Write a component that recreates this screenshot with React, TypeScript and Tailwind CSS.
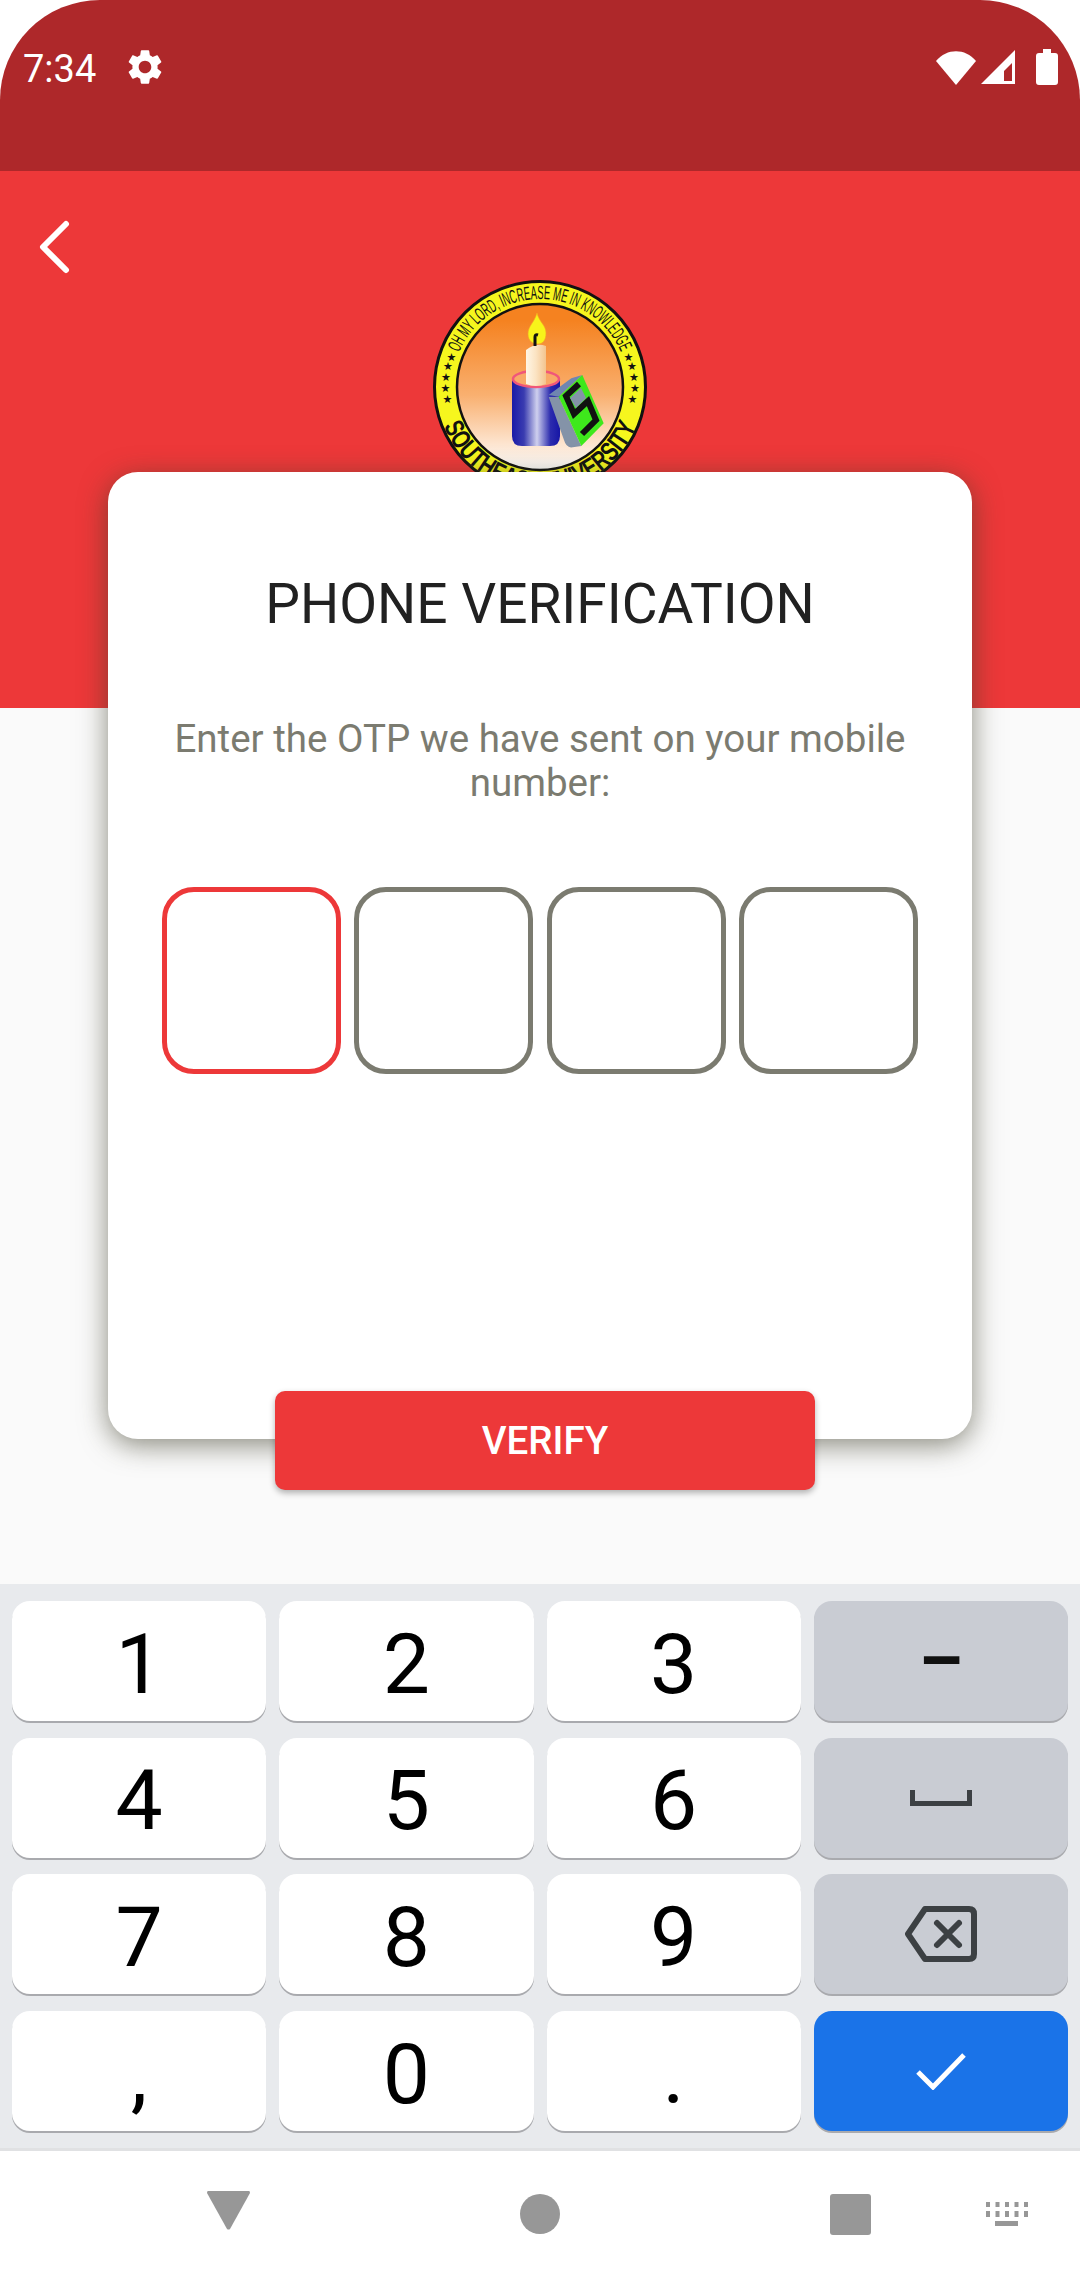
const Logo = () => (
  <svg width="214" height="214" viewBox="0 0 214 214" className="block">
    <defs>
      <linearGradient id="sky" x1="0" y1="0" x2="0" y2="1">
        <stop offset="0.1" stopColor="#f58220" />
        <stop offset="0.55" stopColor="#f9b070" />
        <stop offset="0.85" stopColor="#fde6d2" />
        <stop offset="1" stopColor="#ffffff" />
      </linearGradient>
      <linearGradient id="can" x1="0" y1="0" x2="1" y2="0">
        <stop offset="0" stopColor="#1a1aa8" />
        <stop offset="0.25" stopColor="#3a3cb0" />
        <stop offset="0.52" stopColor="#cfd0ee" />
        <stop offset="0.8" stopColor="#2c2cae" />
        <stop offset="1" stopColor="#1616a6" />
      </linearGradient>
      <linearGradient id="wax" x1="0" y1="0" x2="1" y2="0">
        <stop offset="0" stopColor="#fff6e6" />
        <stop offset="0.5" stopColor="#fbe3c2" />
        <stop offset="1" stopColor="#f3c48e" />
      </linearGradient>
      <path id="topArc" d="M 26 72.600 A 88 88 0 0 1 188 72.600" fill="none" />
      <path id="botArc" d="M 10.600 146 A 104 104 0 0 0 203.400 146" fill="none" />
    </defs>
    <circle cx="107" cy="107" r="105.500" fill="#f6f61e" stroke="#111111" strokeWidth="3" />
    <circle cx="107" cy="107" r="83" fill="url(#sky)" stroke="#111111" strokeWidth="2.500" />
    <text fill="#111111" fontFamily="'Liberation Sans', sans-serif" fontSize="19">
      <textPath href="#topArc" textLength="205" lengthAdjust="spacingAndGlyphs">OH MY LORD, INCREASE ME IN KNOWLEDGE</textPath>
    </text>
    <text fill="#111111" fontFamily="'Liberation Sans', sans-serif" fontSize="27" fontWeight="700">
      <textPath href="#botArc" textLength="246" lengthAdjust="spacingAndGlyphs">SOUTHEAST UNIVERSITY</textPath>
    </text>
    <g fill="#111111" fontSize="11" fontFamily="'DejaVu Sans', sans-serif" textAnchor="middle">
      <text x="18.500" y="81">★</text>
      <text x="15" y="90">★</text>
      <text x="13" y="101">★</text>
      <text x="12.500" y="112">★</text>
      <text x="14.500" y="123">★</text>
      <text x="195.500" y="81">★</text>
      <text x="199" y="90">★</text>
      <text x="201" y="101">★</text>
      <text x="202" y="112">★</text>
      <text x="199.500" y="123">★</text>
    </g>
    <path d="M79 99 V156 Q79 166 89 166 H117 Q127 166 127 156 V99 Z" fill="url(#can)" />
    <ellipse cx="103" cy="99" rx="23" ry="8" fill="#f9a868" stroke="#f0567a" strokeWidth="2.500" />
    <path d="M93 70 Q103 62 113 66 V104 Q103 108 93 104 Z" fill="url(#wax)" />
    <path d="M104 33 C101 43 95 46 95 54 C95 61 100 64 105 64 C110 64 113 60 113 53 C113 45 106 42 104 33 Z" fill="#f7f41a" stroke="#f5a623" strokeWidth="0.600" />
    <path d="M102 66 V57 Q102 54 105 55" fill="none" stroke="#111111" strokeWidth="3" />
    <path d="M115.700 115 L138.300 98.300 L149.300 95 L125.700 116.700 Z" fill="#6f86b0" />
    <path d="M115.700 117 L125.700 116.700 L148.300 166 L138 167.500 Q133 167 131 160 Z" fill="#8493a8" />
    <path d="M125.700 116.700 L149.300 95 L170.700 143.300 L148.300 166 Z" fill="#3ee81c" />
    <path d="M146 104 L133 116 L141 134 L155 121 L163 140 L149 154" fill="none" stroke="#111111" strokeWidth="6" />
    <path d="M137 118 L148 108 L153 118 L143 128 Z" fill="#8493a8" />
  </svg>
);

const NumKey = ({ label }: { label: string }) => (
  <div className="flex items-center justify-center rounded-[18px] bg-white pt-[7px] text-[84px] leading-none text-black shadow-[0_2px_0_#a9aaae]">
    {label}
  </div>
);

const FnKey = ({ children, blue }: { children: React.ReactNode; blue?: boolean }) => (
  <div className={blue ? "flex items-center justify-center rounded-[18px] bg-[#1a73e8] shadow-[0_2px_0_#a9aaae]" : "flex items-center justify-center rounded-[18px] bg-[#c9ccd3] shadow-[0_2px_0_#a9aaae]"}>
    {children}
  </div>
);

const Otp = ({ active }: { active?: boolean }) => (
  <div className={active ? "h-[187px] w-[179px] rounded-[32px] border-[5.5px] border-[#ed3839]" : "h-[187px] w-[179px] rounded-[32px] border-[5.5px] border-[#7b7b70]"} />
);

export default function App() {
  return (
    <div className="flex h-[2280px] w-[1080px] flex-col overflow-hidden bg-white font-['Roboto',sans-serif]">
      <div className="flex h-[171px] shrink-0 items-start justify-between rounded-t-[100px] bg-[#ae282a] pl-[23px] pr-[22px] pt-[49px]">
        <div className="flex items-center gap-[28px]">
          <span className="mt-[1px] text-[38px] leading-[36px] text-white">7:34</span>
          <svg className="mt-[-3px]" width="42" height="42" viewBox="0 0 24 24" fill="#ffffff">
            <path d="M19.14 12.94c.04-.3.06-.61.06-.94 0-.32-.02-.64-.07-.94l2.03-1.58a.49.49 0 0 0 .12-.61l-1.92-3.32a.488.488 0 0 0-.59-.22l-2.39.96c-.5-.38-1.03-.7-1.62-.94l-.36-2.54a.484.484 0 0 0-.48-.41h-3.84c-.24 0-.43.17-.47.41l-.36 2.54c-.59.24-1.13.57-1.62.94l-2.39-.96c-.22-.08-.47 0-.59.22L2.74 8.87c-.12.21-.08.47.12.61l2.03 1.58c-.05.3-.09.63-.09.94s.02.64.07.94l-2.03 1.58a.49.49 0 0 0-.12.61l1.92 3.32c.12.22.37.29.59.22l2.39-.96c.5.38 1.03.7 1.62.94l.36 2.54c.05.24.24.41.48.41h3.84c.24 0 .44-.17.47-.41l.36-2.54c.59-.24 1.13-.56 1.62-.94l2.39.96c.22.08.47 0 .59-.22l1.92-3.32c.12-.22.07-.47-.12-.61l-2.01-1.58zM12 15.6c-1.98 0-3.6-1.62-3.6-3.6s1.62-3.6 3.6-3.6 3.6 1.62 3.6 3.6-1.62 3.6-3.6 3.6z" />
          </svg>
        </div>
        <div className="flex items-start gap-[4px]">
          <svg width="40" height="36" viewBox="0 0 40 36" fill="#ffffff"><path d="M0 12 C11 -1 29 -1 40 12 L20 36 Z" /></svg>
          <svg width="36" height="36" viewBox="0 0 36 36" fill="#ffffff" fillRule="evenodd"><path d="M1 35 H35 V1 Z M24 32 H32 V14 L24 22 Z" /></svg>
          <svg className="ml-[16px]" width="22" height="36" viewBox="0 0 22 36" fill="#ffffff"><path d="M7 0 H15 V4 H19 Q22 4 22 7 V33 Q22 36 19 36 H3 Q0 36 0 33 V7 Q0 4 3 4 H7 Z" /></svg>
        </div>
      </div>

      <div className="flex h-[537px] shrink-0 flex-col bg-[#ed3839]">
        <svg className="ml-[36px] mt-[47px]" width="36" height="58" viewBox="0 0 36 58" fill="none" stroke="#ffffff" strokeWidth="6" strokeLinecap="round" strokeLinejoin="round">
          <path d="M30 6 L7 29 L30 52" />
        </svg>
        <div className="ml-[433px] mt-[4px]"><Logo /></div>
      </div>

      <div className="flex flex-1 flex-col bg-[#fafafa]">
        <div className="relative z-10 ml-[108px] mt-[-236px] flex h-[967px] w-[864px] shrink-0 flex-col items-center rounded-[30px] bg-white pt-[85px] shadow-[0_6px_28px_rgba(60,60,40,0.6)]">
          <h1 className="text-[55px] font-normal leading-[94px] text-[#212121]">PHONE VERIFICATION</h1>
          <p className="mt-[66px] w-[760px] text-center text-[38.5px] leading-[44px] text-[#7b7b70]">
            Enter the OTP we have sent on your mobile number:
          </p>
          <div className="mt-[82px] flex gap-[13.5px]">
            <Otp active />
            <Otp />
            <Otp />
            <Otp />
          </div>
        </div>
        <button className="relative z-20 ml-[275px] mt-[-48px] h-[99px] w-[540px] rounded-[10px] bg-[#ed3839] text-[38.5px] font-medium text-white shadow-[0_3px_6px_rgba(0,0,0,0.3)]">
          VERIFY
        </button>

        <div className="mt-auto flex h-[696px] flex-col">
          <div className="grid flex-1 grid-cols-4 auto-rows-[120px] gap-x-[13px] gap-y-[16.7px] bg-[#e8eaed] px-[12px] pt-[17px]">
            <NumKey label="1" />
            <NumKey label="2" />
            <NumKey label="3" />
            <FnKey><span className="text-[70px] font-bold leading-none text-[#111111]">–</span></FnKey>
            <NumKey label="4" />
            <NumKey label="5" />
            <NumKey label="6" />
            <FnKey>
              <svg width="62" height="16" viewBox="0 0 62 16" fill="none" stroke="#3c4043" strokeWidth="5"><path d="M2.500 0 V13.500 H59.500 V0" /></svg>
            </FnKey>
            <NumKey label="7" />
            <NumKey label="8" />
            <NumKey label="9" />
            <FnKey>
              <svg width="72" height="56" viewBox="0 0 72 56" fill="none" stroke="#3c4043" strokeWidth="6" strokeLinejoin="round">
                <path d="M20 3 H64 Q69 3 69 8 V48 Q69 53 64 53 H20 L3 28 Z" />
                <path d="M32 17 L54 39 M54 17 L32 39" strokeLinecap="round" />
              </svg>
            </FnKey>
            <NumKey label="," />
            <NumKey label="0" />
            <NumKey label="." />
            <FnKey blue>
              <svg width="50" height="38" viewBox="0 0 50 38" fill="none" stroke="#ffffff" strokeWidth="5"><path d="M2 20 L17 35 L48 3" /></svg>
            </FnKey>
          </div>
          <div className="flex h-[132px] shrink-0 items-start border-t-[3px] border-[#e0e1e3] bg-white">
            <svg className="ml-[207px] mt-[40px]" width="43" height="39" viewBox="0 0 43 39" fill="#979797"><path d="M1 0 H42 Q43 0 43 2 L23 38 Q21.500 39 20 38 L0 2 Q0 0 1 0 Z" /></svg>
            <div className="ml-[270px] mt-[43px] h-[40px] w-[40px] rounded-full bg-[#979797]" />
            <div className="ml-[270px] mt-[43px] h-[41px] w-[41px] rounded-[3px] bg-[#979797]" />
            <svg className="ml-[115px] mt-[51px]" width="42" height="24" viewBox="0 0 42 24" fill="#979797">
              <path d="M0 0h4v5H0zM9.500 0h4v5h-4zM19 0h4v5h-4zM28.500 0h4v5h-4zM38 0h4v5h-4zM0 9h4v6H0zM9.500 9h4v6h-4zM19 9h4v6h-4zM28.500 9h4v6h-4zM38 9h4v6h-4zM9 19h23v5H9z" />
            </svg>
          </div>
        </div>
      </div>
    </div>
  );
}
